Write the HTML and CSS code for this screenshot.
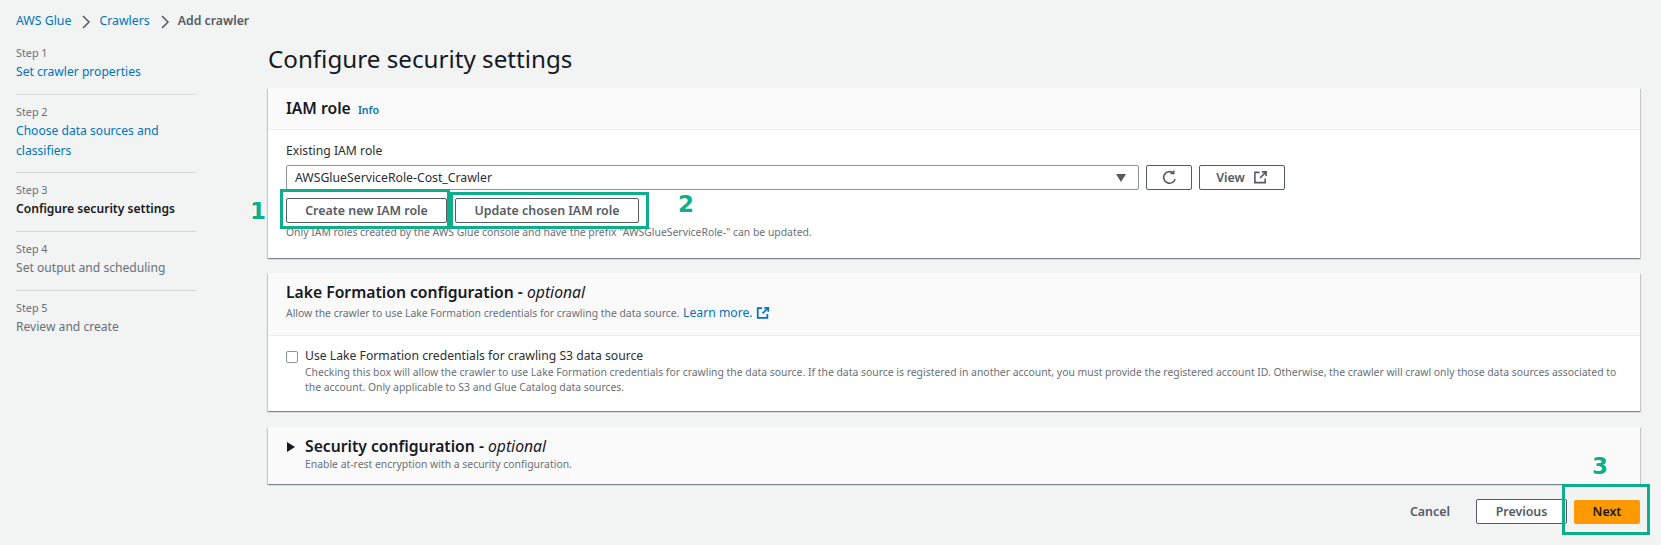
FILE: index.html
```html
<!DOCTYPE html>
<html lang="en">

<head>
    <meta charset="UTF-8">
    <title>Add crawler</title>
    <link rel="stylesheet" href="styles.css">
</head>

<body>
    <div class="crumbs">
        <a href="#">AWS Glue</a>
        <svg class="crumb-arrow" viewBox="0 0 10 16"><path d="M2 2l6 6-6 6"/></svg>
        <a href="#">Crawlers</a>
        <svg class="crumb-arrow" viewBox="0 0 10 16"><path d="M2 2l6 6-6 6"/></svg>
        <span class="crumb-now">Add crawler</span>
    </div>
    <div class="layout">
        <nav class="steps">
            <div class="step">
                <small>Step 1</small>
                <a href="#">Set crawler properties</a>
            </div>
            <div class="step">
                <small>Step 2</small>
                <a href="#">Choose data sources and classifiers</a>
            </div>
            <div class="step">
                <small>Step 3</small>
                <b>Configure security settings</b>
            </div>
            <div class="step">
                <small>Step 4</small>
                <span>Set output and scheduling</span>
            </div>
            <div class="step">
                <small>Step 5</small>
                <span>Review and create</span>
            </div>
        </nav>
        <main class="content">
            <h1>Configure security settings</h1>

            <section class="card iam">
                <div class="card-head">
                    <h2>IAM role <a class="info" href="#">Info</a></h2>
                </div>
                <div class="card-body">
                    <label class="field-label">Existing IAM role</label>
                    <div class="role-row">
                        <div class="select">
                            <span>AWSGlueServiceRole-Cost_Crawler</span>
                            <svg class="caret" viewBox="0 0 10 8"><path d="M0 0h10L5 8z"/></svg>
                        </div>
                        <button class="btn btn-icon">
                            <svg viewBox="0 0 16 16"><path d="M14 9.5A6.2 6.2 0 1 1 11.8 3"/><path d="M12.5 0.4V3.8H9"/></svg>
                        </button>
                        <button class="btn btn-view">View
                            <svg viewBox="0 0 16 16"><path d="M7 2.5H2v11h11V9"/><path d="M9.5 2H14v4.5"/><path d="M14 2L7.5 8.5"/></svg>
                        </button>
                    </div>
                    <div class="role-actions">
                        <button class="btn btn-create">Create new IAM role</button>
                        <button class="btn btn-update">Update chosen IAM role</button>
                    </div>
                    <p class="hint">Only IAM roles created by the AWS Glue console and have the prefix "AWSGlueServiceRole-" can be updated.</p>
                </div>
            </section>

            <section class="card lake">
                <div class="card-head">
                    <h2>Lake Formation configuration - <i>optional</i></h2>
                    <p class="hint">Allow the crawler to use Lake Formation credentials for crawling the data source. <a class="learn" href="#">Learn more.<svg viewBox="0 0 16 16"><path d="M7 2.5H2v11h11V9"/><path d="M9.5 2H14v4.5"/><path d="M14 2L7.5 8.5"/></svg></a></p>
                </div>
                <div class="card-body check-row">
                    <span class="checkbox"></span>
                    <div>
                        <div class="check-label">Use Lake Formation credentials for crawling S3 data source</div>
                        <p class="hint">Checking this box will allow the crawler to use Lake Formation credentials for crawling the data source. If the data source is registered in another account, you must provide the registered account ID. Otherwise, the crawler will crawl only those data sources associated to the account. Only applicable to S3 and Glue Catalog data sources.</p>
                    </div>
                </div>
            </section>

            <section class="card security">
                <svg class="expand" viewBox="0 0 8 10"><path d="M0 0l8 5-8 5z"/></svg>
                <div>
                    <h2>Security configuration - <i>optional</i></h2>
                    <p class="hint">Enable at-rest encryption with a security configuration.</p>
                </div>
            </section>

            <div class="footer">
                <button class="btn-link">Cancel</button>
                <button class="btn btn-prev">Previous</button>
                <button class="btn-next">Next</button>
            </div>
        </main>
    </div>

    <!-- annotations drawn over the screenshot -->
    <div class="mark mark-1"></div>
    <div class="mark mark-2"></div>
    <div class="mark mark-3"></div>
    <span class="num num-1">1</span>
    <span class="num num-2">2</span>
    <span class="num num-3">3</span>
</body>

</html>
```

FILE: styles.css
```css
:root {
    --background: #f2f3f3;
    --text: #16191f;
    --muted: #687078;
    --link: #0073bb;
    --line: #eaeded;
    --button: #545b64;
    --green: #0cae8c;
}

* {
    box-sizing: border-box;
}

body {
    margin: 0;
    height: 545px;
    overflow: hidden;
    position: relative;
    background-color: var(--background);
    color: var(--text);
    font-family: "Noto Sans", sans-serif;
    font-size: 13px;
}

a {
    color: var(--link);
    text-decoration: none;
}

h1,
h2,
p {
    margin: 0;
}

.crumbs {
    display: flex;
    align-items: center;
    height: 20px;
    margin: 11px 0 0 16px;
    font-size: 12.3px;
    line-height: 20px;
}

.crumb-arrow {
    width: 10px;
    height: 16px;
    margin: 2px 8px 0 10px;
    fill: none;
    stroke: var(--button);
    stroke-width: 1.5;
}

.crumb-now {
    font-weight: 600;
    color: var(--button);
}

.layout {
    display: flex;
}

.steps {
    width: 268px;
    flex: none;
    padding: 13px 72px 0 16px;
}

.step {
    display: flex;
    flex-direction: column;
    padding-bottom: 11.7px;
    margin-bottom: 8px;
    border-bottom: 1px solid #d5dbdb;
    font-size: 12.1px;
    line-height: 20px;
}

.step:last-child {
    border-bottom: 0;
}

.step small {
    font-size: 10.8px;
    line-height: 18px;
    color: var(--muted);
}

.step span {
    color: var(--muted);
}

.step b {
    font-weight: 600;
}

.content {
    width: 1372px;
    flex: none;
}

h1 {
    font-size: 24.2px;
    font-weight: 400;
    line-height: 34px;
    margin: 11px 0 12px;
}

.card {
    background-color: #fff;
    box-shadow: 0 1px 1px 0 rgba(0, 28, 36, 0.3), 1px 1px 1px 0 rgba(0, 28, 36, 0.15), -1px 1px 1px 0 rgba(0, 28, 36, 0.15);
    margin-bottom: 15px;
}

.card-head {
    background-color: #fafafa;
    border-bottom: 1px solid var(--line);
    padding: 8px 18px;
}

.card h2 {
    font-size: 15.7px;
    font-weight: 600;
    line-height: 24px;
}

.card h2 i {
    font-weight: 400;
}

.hint {
    font-size: 10.4px;
    line-height: 16px;
    color: var(--muted);
}

.info {
    font-size: 10.6px;
    font-weight: 600;
    margin-left: 3px;
}

.iam {
    height: 170px;
}

.iam .card-head {
    height: 42px;
}

.iam .card-body {
    padding: 11px 18px;
}

.field-label {
    display: block;
    font-size: 12.2px;
    line-height: 20px;
    color: #2a2e33;
}

.role-row,
.role-actions {
    display: flex;
    align-items: center;
}

.role-row {
    margin-top: 4px;
    gap: 7px;
}

.select {
    width: 853px;
    height: 25px;
    display: flex;
    align-items: center;
    justify-content: space-between;
    padding: 0 12px 0 8px;
    border: 1px solid #879596;
    border-radius: 2px;
    font-size: 12.25px;
    color: #2a2e33;
}

.caret {
    width: 10px;
    height: 8px;
    fill: var(--button);
}

.btn {
    height: 25px;
    background-color: #fff;
    border: 1px solid var(--button);
    border-radius: 2px;
    color: var(--button);
    font-family: inherit;
    font-size: 12.4px;
    font-weight: 600;
    padding: 0;
}

.btn svg {
    width: 15px;
    height: 15px;
    fill: none;
    stroke: var(--button);
    stroke-width: 1.7;
}

.btn-icon {
    width: 46px;
    display: flex;
    align-items: center;
    justify-content: center;
}

.btn-view {
    width: 86px;
    display: flex;
    align-items: center;
    justify-content: center;
    gap: 8px;
}

.role-actions {
    margin-top: 8px;
    gap: 8px;
}

.btn-create {
    width: 161px;
}

.btn-update {
    width: 184px;
}

.iam .hint {
    margin-top: 1px;
}

.lake {
    height: 138px;
    margin-bottom: 16px;
}

.lake .card-head {
    height: 63px;
    padding: 7px 18px 0;
}

.lake .card-head .hint {
    margin-top: 1px;
}

.learn {
    font-size: 12.2px;
    margin-left: 1px;
}

.learn svg {
    width: 14px;
    height: 14px;
    fill: none;
    stroke: var(--link);
    stroke-width: 2;
    vertical-align: -3px;
    margin-left: 3px;
}

.check-row {
    display: flex;
    gap: 7px;
    padding: 11px 18px;
}

.check-row .hint {
    line-height: 15px;
}

.checkbox {
    width: 12px;
    height: 12px;
    flex: none;
    margin-top: 4px;
    border: 1px solid #879596;
    border-radius: 2px;
    background-color: #fff;
}

.check-label {
    font-size: 12.2px;
    line-height: 18px;
    color: #2a2e33;
}

.security {
    height: 57px;
    background-color: #fafafa;
    display: flex;
    gap: 10px;
    padding: 8px 18px 8px 19px;
}

.security h2 {
    line-height: 22px;
}

.security .hint {
    margin-top: -1px;
}

.expand {
    width: 8px;
    height: 10px;
    margin-top: 7px;
    flex: none;
    fill: var(--text);
}

.footer {
    display: flex;
    justify-content: flex-end;
    align-items: center;
}

.btn-link {
    background: none;
    border: 0;
    padding: 0;
    font-family: inherit;
    font-size: 12.4px;
    font-weight: 600;
    color: var(--button);
    margin-right: 26px;
}

.btn-prev {
    width: 91px;
    margin-right: 7px;
}

.btn-next {
    width: 66px;
    height: 24px;
    background-color: #ff9900;
    border: 0;
    border-radius: 2px;
    color: var(--text);
    font-family: inherit;
    font-size: 12.4px;
    font-weight: 600;
}

/* green boxes and numbers added on top of the page */
.mark {
    position: absolute;
    border: 3px solid var(--green);
}

.mark-1 {
    left: 280px;
    top: 189px;
    width: 170px;
    height: 40px;
}

.mark-2 {
    left: 450px;
    top: 192px;
    width: 199px;
    height: 37px;
}

.mark-3 {
    left: 1562px;
    top: 484px;
    width: 88px;
    height: 51px;
}

.num {
    position: absolute;
    font-family: "DejaVu Sans", sans-serif;
    font-size: 23px;
    font-weight: 700;
    line-height: 24px;
    color: var(--green);
    text-shadow: 1px 1px 1px #fff, -1px 1px 1px #fff, 1px -1px 1px #fff, -1px -1px 1px #fff;
}

.num-1 {
    left: 250px;
    top: 199px;
}

.num-2 {
    left: 678px;
    top: 192px;
}

.num-3 {
    left: 1592px;
    top: 454px;
}
```
